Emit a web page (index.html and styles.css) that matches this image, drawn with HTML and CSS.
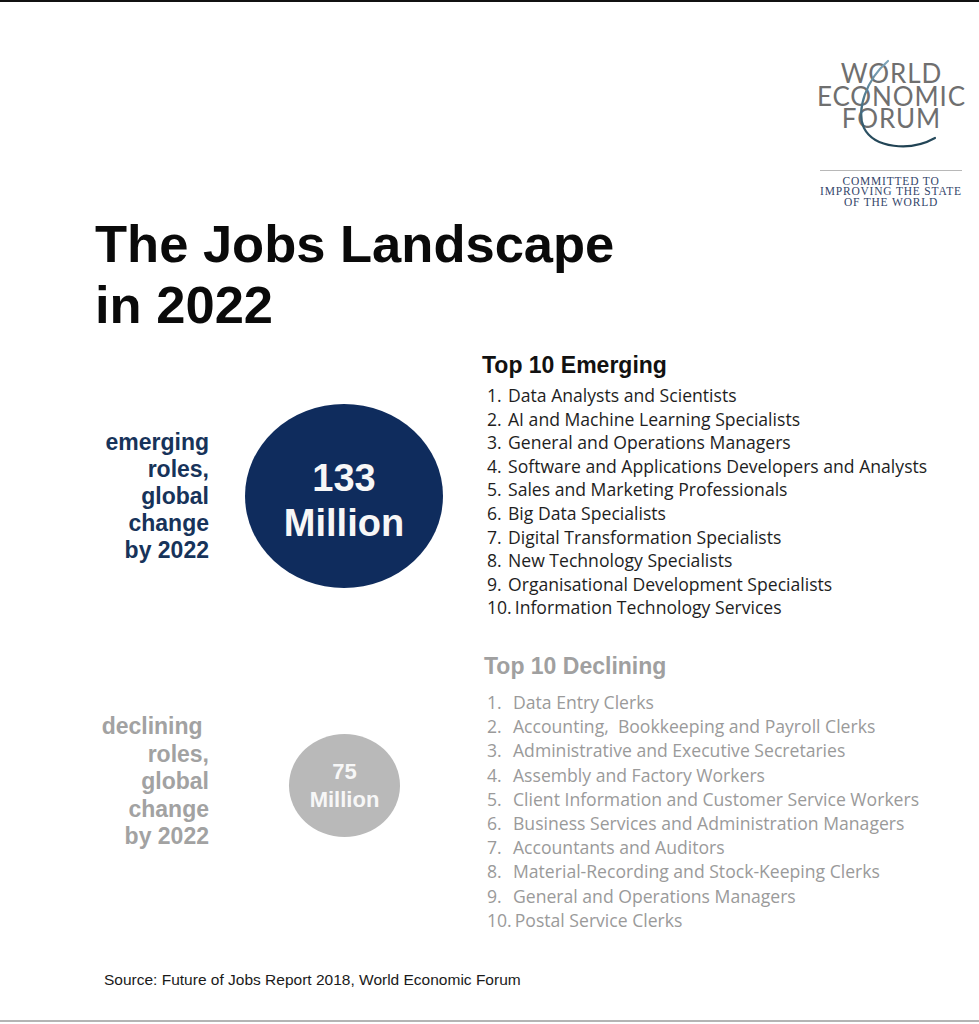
FILE: index.html
```html
<!DOCTYPE html>
<html lang="en">
<head>
<meta charset="utf-8">
<title>The Jobs Landscape in 2022</title>
<link rel="stylesheet" href="styles.css">
</head>
<body>
<div class="page">
  <div class="header">
    <div class="logo">
      <div class="wef">
        <div>WORLD</div>
        <div>ECONOMIC</div>
        <div>FORUM</div>
      </div>
      <div class="rule"></div>
      <div class="tag">COMMITTED TO<br>IMPROVING THE STATE<br>OF THE WORLD</div>
      <svg class="arc" viewBox="0 0 160 100" width="160" height="100" aria-hidden="true">
        <defs>
          <linearGradient id="arcg" x1="0" y1="0" x2="0" y2="1">
            <stop offset="0" stop-color="#7fa6bb"/>
            <stop offset="0.5" stop-color="#4a7489"/>
            <stop offset="1" stop-color="#1f4152"/>
          </linearGradient>
        </defs>
        <path d="M77,-1 C55,18 45,48 53,66 C63,86 99,90 124,76" fill="none" stroke="url(#arcg)" stroke-width="2.2" stroke-linecap="round"/>
      </svg>
    </div>
  </div>

  <h1 class="title">The Jobs Landscape<br>in 2022</h1>

  <section class="row emerging">
    <div class="side">
      <div class="label">emerging<br>roles,<br>global<br>change<br>by 2022</div>
      <div class="circle big"><span>133</span><span>Million</span></div>
    </div>
    <div class="list">
      <h2>Top 10 Emerging</h2>
      <ol>
        <li><span class="n">1.</span>Data Analysts and Scientists</li>
        <li><span class="n">2.</span>AI and Machine Learning Specialists</li>
        <li><span class="n">3.</span>General and Operations Managers</li>
        <li><span class="n">4.</span>Software and Applications Developers and Analysts</li>
        <li><span class="n">5.</span>Sales and Marketing Professionals</li>
        <li><span class="n">6.</span>Big Data Specialists</li>
        <li><span class="n">7.</span>Digital Transformation Specialists</li>
        <li><span class="n">8.</span>New Technology Specialists</li>
        <li><span class="n">9.</span>Organisational Development Specialists</li>
        <li><span class="n">10.</span>Information Technology Services</li>
      </ol>
    </div>
  </section>

  <section class="row declining">
    <div class="side">
      <div class="label">declining&nbsp;<br>roles,<br>global<br>change<br>by 2022</div>
      <div class="circle small"><span>75</span><span>Million</span></div>
    </div>
    <div class="list">
      <h2>Top 10 Declining</h2>
      <ol>
        <li><span class="n">1.</span>Data Entry Clerks</li>
        <li><span class="n">2.</span>Accounting,&nbsp; Bookkeeping and Payroll Clerks</li>
        <li><span class="n">3.</span>Administrative and Executive Secretaries</li>
        <li><span class="n">4.</span>Assembly and Factory Workers</li>
        <li><span class="n">5.</span>Client Information and Customer Service Workers</li>
        <li><span class="n">6.</span>Business Services and Administration Managers</li>
        <li><span class="n">7.</span>Accountants and Auditors</li>
        <li><span class="n">8.</span>Material-Recording and Stock-Keeping Clerks</li>
        <li><span class="n">9.</span>General and Operations Managers</li>
        <li><span class="n">10.</span>Postal Service Clerks</li>
      </ol>
    </div>
  </section>

  <p class="source">Source: Future of Jobs Report 2018, World Economic Forum</p>
</div>
</body>
</html>
```

FILE: styles.css
```css
* { box-sizing: border-box; }

html, body {
  margin: 0;
  padding: 0;
  background: #ffffff;
}

.page {
  width: 979px;
  height: 1022px;
  border-top: 2px solid #111111;
  border-bottom: 2px solid #b4b4b4;
  overflow: hidden;
  font-family: "Liberation Sans", Arial, sans-serif;
  color: #111111;
}

/* ---------- logo ---------- */
.header {
  display: flex;
  justify-content: flex-end;
  padding: 60px 8px 0 0;
}

.logo {
  position: relative;
  width: 160px;
  display: flex;
  flex-direction: column;
  align-items: center;
}

.wef {
  font-family: Lato, "Liberation Sans", sans-serif;
  font-weight: 400;
  font-size: 26px;
  line-height: 22.5px;
  letter-spacing: 0.9px;
  color: #6f6f6f;
  text-align: center;
  padding-left: 1px;
}

.rule {
  width: 142px;
  height: 1px;
  background: #b8b8b8;
  margin-top: 40px;
}

.tag {
  margin-top: 5px;
  font-family: "Liberation Serif", "Times New Roman", serif;
  font-size: 11.5px;
  line-height: 10.5px;
  letter-spacing: 0.8px;
  color: #34456a;
  text-align: center;
  white-space: nowrap;
}

.arc {
  position: absolute;
  left: 0;
  top: 0;
  overflow: visible;
}

/* ---------- title ---------- */
.title {
  margin: 6px 0 0 95px;
  font-size: 52.5px;
  line-height: 61px;
  font-weight: 700;
  color: #0a0a0a;
}

/* ---------- rows ---------- */
.row {
  display: flex;
  align-items: flex-start;
}

.emerging { margin-top: 17px; }
.declining { margin-top: 33px; }

.side {
  width: 482px;
  flex: none;
  display: flex;
  align-items: center;
}

.emerging .side { padding-top: 52px; }
.declining .side { padding-top: 60px; }

.label {
  width: 209px;
  flex: none;
  text-align: right;
  font-weight: 700;
  font-size: 23px;
}

.emerging .label {
  line-height: 27px;
  color: #17335a;
}

.declining .label {
  line-height: 27.6px;
  color: #a2a2a2;
}

.circle {
  flex: none;
  border-radius: 50%;
  display: flex;
  flex-direction: column;
  align-items: center;
  justify-content: center;
  color: #f7f7f7;
  font-weight: 700;
}

.circle.big {
  width: 198px;
  height: 184px;
  margin-left: 36px;
  background: #0f2c5d;
  font-size: 38px;
  line-height: 45px;
  padding-top: 10px;
}

.circle.small {
  width: 111px;
  height: 103px;
  margin-left: 80px;
  margin-top: 8px;
  background: #b9b9b9;
  font-size: 22px;
  line-height: 28px;
}

/* ---------- lists ---------- */
.list h2 {
  margin: 0;
  font-size: 23px;
  line-height: 26px;
  font-weight: 700;
}

.emerging h2 { color: #111111; }
.declining h2 { color: #a0a0a0; padding-left: 2px; }

.list ol {
  list-style: none;
  margin: 0;
  padding: 0 0 0 5px;
  font-family: "Open Sans", Lato, sans-serif;
  font-size: 17.6px;
}

.emerging ol {
  margin-top: 6px;
  line-height: 23.6px;
  color: #1e1e1e;
}

.declining ol {
  margin-top: 11px;
  line-height: 24.2px;
  color: #9a9a9a;
}

.list li { white-space: nowrap; }

.n {
  display: inline-block;
  margin-right: 3px;
}

.emerging .n { min-width: 18px; }
.declining .n { min-width: 23px; }

/* ---------- source ---------- */
.source {
  margin: 39px 0 0 104px;
  font-size: 15.5px;
  line-height: 18px;
  color: #1a1a1a;
}
```
